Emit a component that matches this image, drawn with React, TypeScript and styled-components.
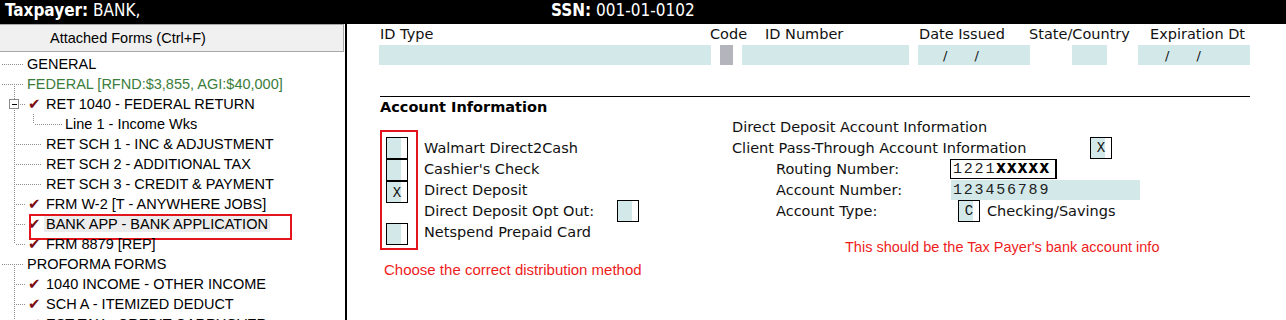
import styled, { createGlobalStyle } from "styled-components";

const GlobalStyle = createGlobalStyle`
  html, body { margin: 0; padding: 0; background: #ffffff; overflow: hidden; }
  #root { width: 1286px; height: 320px; }
  * { box-sizing: border-box; }
`;

const Screen = styled.div`
  width: 1286px;
  height: 320px;
  display: flex;
  flex-direction: column;
  overflow: hidden;
  background: #fff;
`;

const TopBar = styled.header`
  flex: none;
  height: 24px;
  padding: 0 0 4px 5px;
  display: flex;
  align-items: center;
  background: #000;
  color: #fff;
  font-family: "DejaVu Sans Condensed", "DejaVu Sans", sans-serif;
  font-stretch: condensed;
  font-size: 17px;
  white-space: nowrap;
`;

const TopItem = styled.div<{ $w?: number }>`
  width: ${({ $w }) => ($w ? `${$w}px` : "auto")};
  b {
    font-weight: bold;
  }
`;

const Body = styled.div`
  flex: 1;
  display: flex;
  min-height: 0;
`;

/* ---------- left: attached forms tree ---------- */

const LeftPanel = styled.aside`
  width: 347px;
  flex: none;
  border-right: 2px solid #000;
  overflow: hidden;
  font-family: "Liberation Sans", Arial, sans-serif;
  font-size: 14.5px;
  color: #000;
`;

const FormsHeader = styled.div`
  width: 344px;
  height: 28px;
  display: flex;
  align-items: center;
  padding-left: 50px;
  background: #f0f0f0;
  border: 1px solid #a8a8a8;
  border-left: none;
`;

const Tree = styled.div`
  padding-top: 2px;
`;

const TreeRow = styled.div<{ $color?: string; $selected?: boolean }>`
  position: relative;
  height: 20px;
  display: flex;
  align-items: center;
  white-space: nowrap;
  color: ${({ $color }) => $color ?? "#000"};

  ${({ $selected }) =>
    $selected &&
    `
    &::after {
      content: "";
      position: absolute;
      left: 29px;
      top: 0;
      width: 259px;
      height: 22px;
      border: 2px solid #e3141b;
    }
  `}
`;

const Check = styled.span`
  width: 18px;
  flex: none;
  font-family: "DejaVu Sans", sans-serif;
  font-size: 15px;
  line-height: 1;
  color: #7a0c12;
`;

const NodeText = styled.span<{ $selected?: boolean }>`
  ${({ $selected }) =>
    $selected &&
    `
    background: #ececec;
    margin-left: -2px;
    padding: 0 2px;
  `}
`;

type Node = {
  text: string;
  level: 0 | 1 | 2;
  color?: string;
  open?: boolean;
  check?: boolean;
  expander?: boolean;
  last?: boolean;
  selected?: boolean;
};

const nodes: Node[] = [
  { text: "GENERAL", level: 0 },
  { text: "FEDERAL [RFND:$3,855, AGI:$40,000]", level: 0, color: "#3b7d3b", open: true },
  { text: "RET 1040 - FEDERAL RETURN", level: 1, check: true, expander: true },
  { text: "Line 1 - Income Wks", level: 2 },
  { text: "RET SCH 1 - INC & ADJUSTMENT", level: 1 },
  { text: "RET SCH 2 - ADDITIONAL TAX", level: 1 },
  { text: "RET SCH 3 - CREDIT & PAYMENT", level: 1 },
  { text: "FRM W-2 [T - ANYWHERE JOBS]", level: 1, check: true },
  { text: "BANK APP - BANK APPLICATION", level: 1, check: true, selected: true },
  { text: "FRM 8879 [REP]", level: 1, check: true, last: true },
  { text: "PROFORMA FORMS", level: 0, open: true },
  { text: "1040 INCOME - OTHER INCOME", level: 1, check: true },
  { text: "SCH A - ITEMIZED DEDUCT", level: 1, check: true },
  { text: "EST TAX - CREDIT CARRYOVER", level: 1, check: true },
];

const dot = { stroke: "#8f8f8f", strokeDasharray: "1 1", shapeRendering: "crispEdges" as const };

function Guides({ node }: { node: Node }) {
  const w = node.level === 0 ? 27 : node.level === 2 ? 65 : node.check ? 28 : 46;
  return (
    <svg width={w} height={20} style={{ flex: "none" }}>
      {node.level === 0 && (
        <>
          <line x1={2} y1={10.5} x2={24} y2={10.5} {...dot} />
          {node.open && <line x1={14.5} y1={12} x2={14.5} y2={20} {...dot} />}
        </>
      )}
      {node.level === 1 && (
        <>
          <line x1={14.5} y1={0} x2={14.5} y2={node.last ? 10 : 20} {...dot} />
          <line x1={16} y1={10.5} x2={node.check ? 26 : 42} y2={10.5} {...dot} />
          {node.expander && (
            <>
              <rect x={9.5} y={5.5} width={9} height={9} fill="#fff" stroke="#8a8a8a" shapeRendering="crispEdges" />
              <line x1={11.5} y1={10.5} x2={16.5} y2={10.5} stroke="#000" shapeRendering="crispEdges" />
            </>
          )}
        </>
      )}
      {node.level === 2 && (
        <>
          <line x1={14.5} y1={0} x2={14.5} y2={20} {...dot} />
          <line x1={33.5} y1={0} x2={33.5} y2={10} {...dot} />
          <line x1={35} y1={10.5} x2={62} y2={10.5} {...dot} />
        </>
      )}
    </svg>
  );
}

/* ---------- right: bank application form ---------- */

const RightPanel = styled.main`
  flex: 1;
  padding-left: 33px;
  font-family: "DejaVu Sans", Verdana, sans-serif;
  font-size: 14.5px;
  color: #111;
  white-space: nowrap;
`;

const HeadRow = styled.div`
  height: 19px;
  display: flex;
  align-items: center;
`;

const HeadLabel = styled.span<{ $w?: number }>`
  width: ${({ $w }) => ($w ? `${$w}px` : "auto")};
  flex: none;
`;

const FieldRow = styled.div`
  height: 20px;
  margin-top: 2px;
  display: flex;
`;

const Field = styled.div<{ $w: number; $ml: number; $grey?: boolean }>`
  width: ${({ $w }) => $w}px;
  margin-left: ${({ $ml }) => $ml}px;
  flex: none;
  background: ${({ $grey }) => ($grey ? "#b4b4bc" : "#d3e9e9")};
`;

const DateField = styled(Field)<{ $pad: number }>`
  display: flex;
  align-items: center;
  gap: 27px;
  padding-left: ${({ $pad }) => $pad}px;
  font-size: 13px;
`;

const Rule = styled.div`
  width: 870px;
  height: 1px;
  margin-top: 31px;
  background: #000;
`;

const SectionTitle = styled.div`
  height: 19px;
  display: flex;
  align-items: center;
  font-weight: bold;
  color: #000;
`;

const Lower = styled.div`
  display: flex;
  align-items: flex-start;
`;

const MethodBlock = styled.div`
  width: 352px;
  flex: none;
  margin-top: 14px;
`;

const MethodRow = styled.div`
  display: flex;
  align-items: flex-start;
`;

const RedFrame = styled.div`
  width: 38px;
  flex: none;
  display: flex;
  flex-direction: column;
  padding: 5px 0 3px 4px;
  border: 2px solid #e3141b;
`;

const Box = styled.div<{ $stack?: boolean }>`
  width: 22px;
  height: 22px;
  flex: none;
  display: flex;
  align-items: center;
  justify-content: center;
  padding-top: 1px;
  border: 1px solid #000;
  background: linear-gradient(to right, #d3e9e9 calc(100% - 6px), #ffffff 0);
  font-family: "Liberation Mono", "Courier New", monospace;
  font-size: 14px;
  color: #111;
  & + & {
    margin-top: ${({ $stack }) => ($stack ? "-1px" : "0")};
  }
`;

const BoxGap = styled.div`
  height: 21px;
  margin-bottom: -1px;
`;

const MethodLabels = styled.div`
  margin: 7px 0 0 6px;
  display: flex;
  flex-direction: column;
`;

const Line = styled.div<{ $indent?: number }>`
  height: 21px;
  display: flex;
  align-items: center;
  padding-left: ${({ $indent }) => $indent ?? 0}px;
`;

const LineLabel = styled.span<{ $w: number }>`
  width: ${({ $w }) => $w}px;
  flex: none;
`;

const Note = styled.div<{ $ml: number; $mt: number; $size: number }>`
  margin: ${({ $mt }) => $mt}px 0 0 ${({ $ml }) => $ml}px;
  font-family: "Liberation Sans", Arial, sans-serif;
  font-size: ${({ $size }) => $size}px;
  line-height: 16px;
  color: #ee1c1c;
`;

const DepositBlock = styled.div`
  display: flex;
  flex-direction: column;
`;

const NumberField = styled.div<{ $w: number; $outlined?: boolean }>`
  width: ${({ $w }) => $w}px;
  height: 20px;
  margin-top: 1px;
  display: flex;
  align-items: center;
  padding-left: 2px;
  background: ${({ $outlined }) => ($outlined ? "#fff" : "#d3e9e9")};
  border: ${({ $outlined }) => ($outlined ? "1px solid #000" : "none")};
  border-right-width: ${({ $outlined }) => ($outlined ? "2px" : "0")};
  font-family: "Liberation Mono", "Courier New", monospace;
  font-size: 15px;
  letter-spacing: 1.8px;
  color: #222;
  b {
    font-weight: bold;
    color: #000;
    text-shadow: 0.5px 0 0 #000;
  }
`;

const TypeBox = styled(Box)`
  margin-left: 8px;
  margin-right: 7px;
`;

export default function App() {
  return (
    <>
      <GlobalStyle />
      <Screen>
        <TopBar>
          <TopItem $w={546}>
            <b>Taxpayer:</b> BANK,
          </TopItem>
          <TopItem>
            <b>SSN:</b> 001-01-0102
          </TopItem>
        </TopBar>
        <Body>
          <LeftPanel>
            <FormsHeader>Attached Forms (Ctrl+F)</FormsHeader>
            <Tree>
              {nodes.map((n) => (
                <TreeRow key={n.text} $color={n.color} $selected={n.selected}>
                  <Guides node={n} />
                  {n.check && <Check>✔</Check>}
                  <NodeText $selected={n.selected}>{n.text}</NodeText>
                </TreeRow>
              ))}
            </Tree>
          </LeftPanel>

          <RightPanel>
            <HeadRow>
              <HeadLabel $w={330}>ID Type</HeadLabel>
              <HeadLabel $w={55}>Code</HeadLabel>
              <HeadLabel $w={154}>ID Number</HeadLabel>
              <HeadLabel $w={110}>Date Issued</HeadLabel>
              <HeadLabel $w={121}>State/Country</HeadLabel>
              <HeadLabel>Expiration Dt</HeadLabel>
            </HeadRow>
            <FieldRow>
              <Field $w={332} $ml={-1} />
              <Field $w={13} $ml={9} $grey />
              <Field $w={167} $ml={9} />
              <DateField $w={112} $ml={9} $pad={25}>
                <span>/</span>
                <span>/</span>
              </DateField>
              <Field $w={35} $ml={42} />
              <DateField $w={112} $ml={31} $pad={27}>
                <span>/</span>
                <span>/</span>
              </DateField>
            </FieldRow>
            <Rule />
            <SectionTitle>Account Information</SectionTitle>

            <Lower>
              <MethodBlock>
                <MethodRow>
                  <RedFrame>
                    <Box $stack />
                    <Box $stack />
                    <Box $stack>X</Box>
                    <BoxGap />
                    <Box $stack />
                  </RedFrame>
                  <MethodLabels>
                    <Line>Walmart Direct2Cash</Line>
                    <Line>Cashier's Check</Line>
                    <Line>Direct Deposit</Line>
                    <Line>
                      <LineLabel $w={193}>Direct Deposit Opt Out:</LineLabel>
                      <Box />
                    </Line>
                    <Line>Netspend Prepaid Card</Line>
                  </MethodLabels>
                </MethodRow>
                <Note $ml={4} $mt={12} $size={15}>
                  Choose the correct distribution method
                </Note>
              </MethodBlock>

              <DepositBlock>
                <Line>Direct Deposit Account Information</Line>
                <Line>
                  <LineLabel $w={358}>Client Pass-Through Account Information</LineLabel>
                  <Box>X</Box>
                </Line>
                <Line $indent={44}>
                  <LineLabel $w={174}>Routing Number:</LineLabel>
                  <NumberField $w={107} $outlined>
                    1221<b>XXXXX</b>
                  </NumberField>
                </Line>
                <Line $indent={44}>
                  <LineLabel $w={175}>Account Number:</LineLabel>
                  <NumberField $w={189}>123456789</NumberField>
                </Line>
                <Line $indent={44}>
                  <LineLabel $w={174}>Account Type:</LineLabel>
                  <TypeBox>C</TypeBox>
                  <span>Checking/Savings</span>
                </Line>
                <Note $ml={113} $mt={18} $size={14.5}>
                  This should be the Tax Payer's bank account info
                </Note>
              </DepositBlock>
            </Lower>
          </RightPanel>
        </Body>
      </Screen>
    </>
  );
}
